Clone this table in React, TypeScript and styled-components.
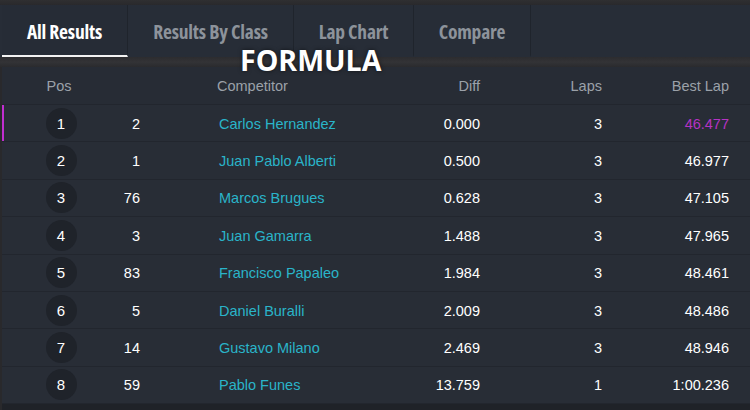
import React from "react";
import styled, { createGlobalStyle } from "styled-components";

const GlobalStyle = createGlobalStyle`
  html, body {
    margin: 0;
    padding: 0;
    background: #2b2c30;
  }
  body {
    width: 750px;
    height: 410px;
    overflow: hidden;
    font-family: "Liberation Sans", Arial, sans-serif;
  }
`;

const Page = styled.div`
  position: relative;
  width: 750px;
  height: 410px;
  padding-top: 5px;
  box-sizing: border-box;
  background: linear-gradient(180deg, #2f2f31 0px, #29292c 5px, #29292c 100%);
`;

const TabBar = styled.div`
  display: flex;
  height: 52px;
  padding-left: 2px;
  background: #272d37;
`;

const Tab = styled.div<{ $active?: boolean; $w: number }>`
  box-sizing: border-box;
  width: ${(p) => p.$w}px;
  display: flex;
  align-items: center;
  justify-content: center;
  font-family: "Open Sans", sans-serif;
  font-stretch: 75%;
  font-weight: 700;
  font-size: 19.5px;
  letter-spacing: -0.2px;
  color: ${(p) => (p.$active ? "#ffffff" : "#8d939b")};
  background: ${(p) => (p.$active ? "#262c36" : "#272d37")};
  border-right: 1px solid #1f242c;
  border-bottom: 2px solid ${(p) => (p.$active ? "#f2f2f2" : "transparent")};
  padding-top: 2px;
`;

const Gap = styled.div`
  height: 10px;
  background: linear-gradient(180deg, #2c2c2f, #333336 50%, #2a2b2e);
`;

const Title = styled.div`
  position: absolute;
  left: 240px;
  top: 41px;
  font-family: "Open Sans", sans-serif;
  font-weight: 700;
  font-size: 28.5px;
  color: #ffffff;
  text-shadow: 0 0 4px rgba(0, 0, 0, 0.6);
`;

const Table = styled.div`
  margin-left: 2px;
  background: #272c35;
`;

const cols = "114px 24px 240px 100px 122px 127px";

const HeaderRow = styled.div`
  display: grid;
  grid-template-columns: ${cols};
  height: 38px;
  align-items: center;
  font-size: 14.5px;
  color: #9ba1a9;
  border-bottom: 1px solid #22262e;
  box-sizing: border-box;
`;

const Row = styled.div<{ $fastest?: boolean }>`
  display: grid;
  grid-template-columns: ${cols};
  height: 37.4px;
  align-items: center;
  font-size: 14.5px;
  color: #ffffff;
  border-bottom: 1px solid #22262e;
  box-sizing: border-box;
  background: #282d36;
  box-shadow: ${(p) => (p.$fastest ? "inset 2px 0 0 #c02ed0" : "none")};
`;

const Cell = styled.div<{ $align?: "left" | "right" | "center"; $pad?: number }>`
  text-align: ${(p) => p.$align || "left"};
  padding-left: ${(p) => p.$pad || 0}px;
  white-space: nowrap;
  padding-top: 1px;
`;

const PosBadge = styled.div`
  margin: 0 auto;
  width: 31px;
  height: 31px;
  border-radius: 50%;
  background: #1f232a;
  display: flex;
  align-items: center;
  justify-content: center;
  font-size: 15px;
  transform: translateX(2px);
`;

const Name = styled(Cell)`
  color: #2ab4c9;
`;

const Best = styled(Cell)<{ $fastest?: boolean }>`
  color: ${(p) => (p.$fastest ? "#b633c4" : "#ffffff")};
`;

const Footer = styled.div`
  height: 6px;
  background: #1f2228;
`;

const results = [
  { pos: 1, no: "2", name: "Carlos Hernandez", diff: "0.000", laps: 3, best: "46.477" },
  { pos: 2, no: "1", name: "Juan Pablo Alberti", diff: "0.500", laps: 3, best: "46.977" },
  { pos: 3, no: "76", name: "Marcos Brugues", diff: "0.628", laps: 3, best: "47.105" },
  { pos: 4, no: "3", name: "Juan Gamarra", diff: "1.488", laps: 3, best: "47.965" },
  { pos: 5, no: "83", name: "Francisco Papaleo", diff: "1.984", laps: 3, best: "48.461" },
  { pos: 6, no: "5", name: "Daniel Buralli", diff: "2.009", laps: 3, best: "48.486" },
  { pos: 7, no: "14", name: "Gustavo Milano", diff: "2.469", laps: 3, best: "48.946" },
  { pos: 8, no: "59", name: "Pablo Funes", diff: "13.759", laps: 1, best: "1:00.236" },
];

const tabs = [
  { label: "All Results", w: 126, active: true },
  { label: "Results By Class", w: 166 },
  { label: "Lap Chart", w: 120 },
  { label: "Compare", w: 117 },
];

export default function App() {
  return (
    <Page>
      <GlobalStyle />
      <TabBar>
        {tabs.map((t) => (
          <Tab key={t.label} $w={t.w} $active={t.active}>
            {t.label}
          </Tab>
        ))}
      </TabBar>
      <Gap />
      <Table>
        <HeaderRow>
          <Cell $align="center">Pos</Cell>
          <Cell />
          <Cell $pad={77}>Competitor</Cell>
          <Cell $align="right">Diff</Cell>
          <Cell $align="right">Laps</Cell>
          <Cell $align="right">Best Lap</Cell>
        </HeaderRow>
        {results.map((r) => (
          <Row key={r.pos} $fastest={r.pos === 1}>
            <PosBadge>{r.pos}</PosBadge>
            <Cell $align="right">{r.no}</Cell>
            <Name $pad={79}>{r.name}</Name>
            <Cell $align="right">{r.diff}</Cell>
            <Cell $align="right">{r.laps}</Cell>
            <Best $align="right" $fastest={r.pos === 1}>
              {r.best}
            </Best>
          </Row>
        ))}
        <Footer />
      </Table>
      <Title>FORMULA</Title>
    </Page>
  );
}
